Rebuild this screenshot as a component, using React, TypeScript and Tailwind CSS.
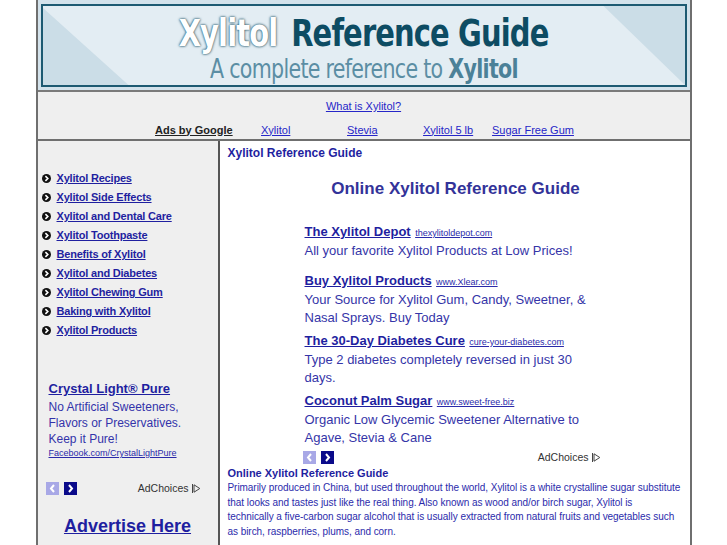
import React from "react";

const menu = [
  "Xylitol Recipes",
  "Xylitol Side Effects",
  "Xylitol and Dental Care",
  "Xylitol Toothpaste",
  "Benefits of Xylitol",
  "Xylitol and Diabetes",
  "Xylitol Chewing Gum",
  "Baking with Xylitol",
  "Xylitol Products",
];

const ads = [
  { title: "The Xylitol Depot", url: "thexylitoldepot.com", text: "All your favorite Xylitol Products at Low Prices!" },
  { title: "Buy Xylitol Products", url: "www.Xlear.com", text: "Your Source for Xylitol Gum, Candy, Sweetner, & Nasal Sprays. Buy Today" },
  { title: "The 30-Day Diabetes Cure", url: "cure-your-diabetes.com", text: "Type 2 diabetes completely reversed in just 30 days." },
  { title: "Coconut Palm Sugar", url: "www.sweet-free.biz", text: "Organic Low Glycemic Sweetener Alternative to Agave, Stevia & Cane" },
];

function Bullet() {
  return (
    <svg width="9" height="9" viewBox="0 0 9 9" className="shrink-0">
      <circle cx="4.5" cy="4.5" r="4.5" fill="#111" />
      <path d="M3.4 2.2 L5.8 4.5 L3.4 6.8" stroke="#fff" strokeWidth="1.6" fill="none" />
    </svg>
  );
}

function AdNav() {
  return (
    <div className="flex gap-[5px]">
      <span className="flex h-[13px] w-[13px] items-center justify-center bg-[#a8a8e6]">
        <svg width="7" height="9" viewBox="0 0 7 9">
          <path d="M5 1 L2 4.5 L5 8" stroke="#fff" strokeWidth="2" fill="none" />
        </svg>
      </span>
      <span className="flex h-[13px] w-[13px] items-center justify-center bg-[#0a0a8a]">
        <svg width="7" height="9" viewBox="0 0 7 9">
          <path d="M2 1 L5 4.5 L2 8" stroke="#fff" strokeWidth="2" fill="none" />
        </svg>
      </span>
    </div>
  );
}

function AdChoices() {
  return (
    <span className="flex items-center gap-[2px] text-[10.5px] leading-[13px] text-[#333]">
      AdChoices
      <svg width="10" height="11" viewBox="0 0 10 11">
        <path d="M1.5 1 V10" stroke="#444" strokeWidth="1" />
        <path d="M3 1.8 L8.8 5.5 L3 9.2 Z" stroke="#444" strokeWidth="1" fill="none" />
      </svg>
    </span>
  );
}

export default function App() {
  return (
    <div className="min-h-[545px] bg-white font-['Liberation_Sans',Arial,sans-serif]">
      <div className="mx-auto w-[656px] border-x-2 border-[#6f6f6f]">
        {/* banner */}
        <div className="relative border-b-2 border-[#7a7a7a] bg-[#d3e2eb] px-[3px] pb-[3px] pt-[4px]">
          <div className="relative h-[83px] overflow-hidden border-2 border-[#1d5a72] bg-[#e3edf3]">
            <svg className="absolute inset-0" width="100%" height="100%" viewBox="0 0 646 79" preserveAspectRatio="none">
              <polygon points="0,2 0,79 86,79" fill="#cbdde7" />
              <polygon points="564,0 646,0 646,79" fill="#cbdde7" />
            </svg>
            <div className="relative flex flex-col items-center pt-[7px] font-['DejaVu_Sans_Condensed','DejaVu_Sans',sans-serif] font-bold">
              <div className="flex h-[40px] scale-x-[0.87] items-center gap-[16px] whitespace-nowrap text-[37px] leading-none tracking-[-1px]">
                <span className="text-white [text-shadow:0_0_3px_#2d5e72,0_0_2px_#2d5e72]">Xylitol</span>
                <span className="text-[#0d4c63]">Reference Guide</span>
              </div>
              <div className="mt-[3px] scale-x-[0.88] whitespace-nowrap text-[26px] font-normal leading-none tracking-[-0.8px] text-[#5b8ea4]">
                A complete reference to <span className="font-bold text-[#4b8198]">Xylitol</span>
              </div>
            </div>
          </div>
        </div>

        {/* nav */}
        <div className="flex h-[49px] flex-col items-center border-b-2 border-[#6f6f6f] bg-[#efefef] text-[11px]">
          <a className="mt-[6px] text-[#2626c8] underline">What is Xylitol?</a>
          <div className="mt-[7px] flex items-center pl-[2px]">
            <span className="w-[106px] font-bold text-[#222] underline">Ads by Google</span>
            <a className="w-[86px] text-[#2626c8] underline">Xylitol</a>
            <a className="w-[76px] text-[#2626c8] underline">Stevia</a>
            <a className="w-[69px] text-[#2626c8] underline">Xylitol 5 lb</a>
            <a className="text-[#2626c8] underline">Sugar Free Gum</a>
          </div>
        </div>

        {/* body */}
        <div className="flex">
          <div className="w-[182px] shrink-0 border-r-2 border-[#555] bg-[#efefef]">
            <ul className="flex flex-col gap-[6px] pl-[4px] pt-[31px]">
              {menu.map((m) => (
                <li key={m} className="flex h-[13px] items-center gap-[6px]">
                  <Bullet />
                  <a className="text-[11px] font-bold tracking-[-0.2px] text-[#1f1fa0] underline">{m}</a>
                </li>
              ))}
            </ul>
            <div className="pl-[11px] pt-[43px] text-[13px] leading-[17px]">
              <a className="font-bold text-[#1f1fa0] underline">Crystal Light® Pure</a>
              <p className="mt-[2px] text-[12px] leading-[16px] text-[#3333aa]">
                No Artificial Sweeteners,
                <br />
                Flavors or Preservatives.
                <br />
                Keep it Pure!
              </p>
              <a className="block text-[9px] leading-[12px] text-[#2a2aaa] underline">Facebook.com/CrystalLightPure</a>
            </div>
            <div className="flex items-center justify-between pl-[8px] pr-[17px] pt-[23px]">
              <AdNav />
              <AdChoices />
            </div>
            <div className="pb-[8px] pt-[18px] text-center">
              <a className="text-[18px] font-bold text-[#1f1fa0] underline">Advertise Here</a>
            </div>
          </div>

          <div className="min-w-0 flex-1 bg-white pl-[8px] pr-[6px]">
            <h2 className="pt-[3px] text-[12px] font-bold text-[#1f1fa0]">Xylitol Reference Guide</h2>
            <h1 className="mt-[14px] text-center text-[17px] font-bold text-[#333399]">Online Xylitol Reference Guide</h1>
            <div className="flex flex-col gap-[5px] pl-[77px] pr-[88px] pt-[20px]">
              {ads.map((a, i) => (
                <div key={a.title} className={i === 0 ? "mb-[7px]" : ""}>
                  <div className="leading-[18px]">
                    <a className="text-[13px] font-bold text-[#1f1fa0] underline">{a.title}</a>{" "}
                    <a className="text-[9px] text-[#2a2aaa] underline">{a.url}</a>
                  </div>
                  <p className="text-[13px] leading-[17.5px] text-[#3535a8]">{a.text}</p>
                </div>
              ))}
            </div>
            <div className="flex items-center justify-between pl-[75px] pr-[83px] pt-[5px]">
              <AdNav />
              <AdChoices />
            </div>
            <h3 className="mt-[3px] text-[11px] font-bold leading-[13px] text-[#1f1fa0]">Online Xylitol Reference Guide</h3>
            <p className="mt-[1px] whitespace-nowrap text-[10px] leading-[14.5px] tracking-[-0.05px] text-[#2b2bab]">
              Primarily produced in China, but used throughout the world, Xylitol is a white crystalline sugar substitute
              <br />
              that looks and tastes just like the real thing. Also known as wood and/or birch sugar, Xylitol is
              <br />
              technically a five-carbon sugar alcohol that is usually extracted from natural fruits and vegetables such
              <br />
              as birch, raspberries, plums, and corn.
            </p>
          </div>
        </div>
      </div>
    </div>
  );
}
